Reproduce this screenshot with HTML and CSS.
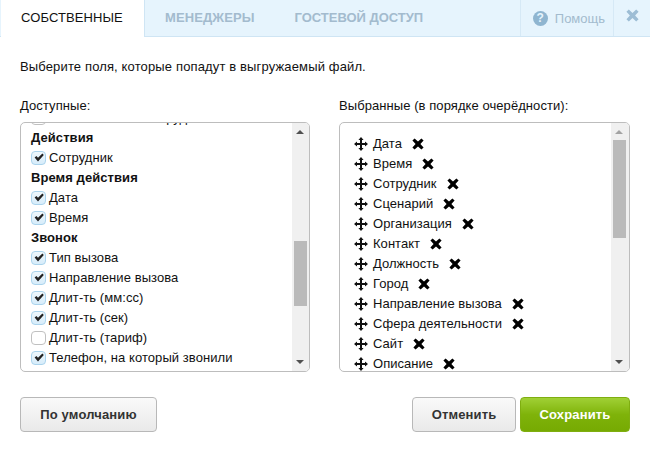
FILE: index.html
```html
<!DOCTYPE html>
<html lang="en">
<head>
    <meta charset="UTF-8">
    <meta name="viewport" content="width=device-width, initial-scale=1.0">
    <title>Выгрузка</title>
    <link rel="stylesheet" href="styles.css">
</head>
<body>
    <svg class="sprites" width="0" height="0">
        <symbol id="move" viewBox="0 0 14 14">
            <path d="M7 0 9.6 3H8v3h3V4.4L14 7l-3 2.6V8H8v3h1.6L7 14l-2.6-3H6V8H3v1.6L0 7l3-2.6V6h3V3H4.4z"/>
        </symbol>
        <symbol id="cross" viewBox="0 0 12 12">
            <path d="M2.6.4 6 3.6 9.4.4l2.2 2.2L8.4 6l3.2 3.4-2.2 2.2L6 8.4l-3.4 3.2-2.2-2.2L3.6 6 .4 2.6z"/>
        </symbol>
        <symbol id="check" viewBox="0 0 10 9">
            <path d="M0.6 4.6 2.4 3 4 4.8 8.4 0.4 9.8 2 4 8.4z"/>
        </symbol>
    </svg>

    <!-- Tabs -->
    <div class="tabs">
        <div class="tab tab-active">СОБСТВЕННЫЕ</div>
        <div class="tab">МЕНЕДЖЕРЫ</div>
        <div class="tab tab-guest">ГОСТЕВОЙ ДОСТУП</div>
        <div class="tab-help">
            <span class="help-icon">?</span>
            Помощь
        </div>
        <div class="tab-close">
            <svg width="13" height="13"><use href="#cross"/></svg>
        </div>
    </div>

    <div class="content">
        <p class="intro">Выберите поля, которые попадут в выгружаемый файл.</p>

        <div class="columns">
            <div class="column column-left">
                <div class="column-title">Доступные:</div>
                <div class="listbox">
                    <div class="list-view">
                        <ul class="fields">
                            <li class="field"><span class="box"></span>Ответственный сотрудник</li>
                            <li class="group">Действия</li>
                            <li class="field"><span class="box box-on"><svg width="10" height="9"><use href="#check"/></svg></span>Сотрудник</li>
                            <li class="group">Время действия</li>
                            <li class="field"><span class="box box-on"><svg width="10" height="9"><use href="#check"/></svg></span>Дата</li>
                            <li class="field"><span class="box box-on"><svg width="10" height="9"><use href="#check"/></svg></span>Время</li>
                            <li class="group">Звонок</li>
                            <li class="field"><span class="box box-on"><svg width="10" height="9"><use href="#check"/></svg></span>Тип вызова</li>
                            <li class="field"><span class="box box-on"><svg width="10" height="9"><use href="#check"/></svg></span>Направление вызова</li>
                            <li class="field"><span class="box box-on"><svg width="10" height="9"><use href="#check"/></svg></span>Длит-ть (мм:сс)</li>
                            <li class="field"><span class="box box-on"><svg width="10" height="9"><use href="#check"/></svg></span>Длит-ть (сек)</li>
                            <li class="field"><span class="box"></span>Длит-ть (тариф)</li>
                            <li class="field"><span class="box box-on"><svg width="10" height="9"><use href="#check"/></svg></span>Телефон, на который звонили</li>
                        </ul>
                    </div>
                    <div class="scrollbar">
                        <span class="arrow arrow-up"></span>
                        <div class="track"><div class="thumb thumb-left"></div></div>
                        <span class="arrow arrow-down"></span>
                    </div>
                </div>
            </div>

            <div class="column column-right">
                <div class="column-title">Выбранные (в порядке очерёдности):</div>
                <div class="listbox">
                    <div class="list-view">
                        <ul class="chosen">
                            <li><svg class="move" width="14" height="14"><use href="#move"/></svg>Дата<svg class="remove" width="12" height="12"><use href="#cross"/></svg></li>
                            <li><svg class="move" width="14" height="14"><use href="#move"/></svg>Время<svg class="remove" width="12" height="12"><use href="#cross"/></svg></li>
                            <li><svg class="move" width="14" height="14"><use href="#move"/></svg>Сотрудник<svg class="remove" width="12" height="12"><use href="#cross"/></svg></li>
                            <li><svg class="move" width="14" height="14"><use href="#move"/></svg>Сценарий<svg class="remove" width="12" height="12"><use href="#cross"/></svg></li>
                            <li><svg class="move" width="14" height="14"><use href="#move"/></svg>Организация<svg class="remove" width="12" height="12"><use href="#cross"/></svg></li>
                            <li><svg class="move" width="14" height="14"><use href="#move"/></svg>Контакт<svg class="remove" width="12" height="12"><use href="#cross"/></svg></li>
                            <li><svg class="move" width="14" height="14"><use href="#move"/></svg>Должность<svg class="remove" width="12" height="12"><use href="#cross"/></svg></li>
                            <li><svg class="move" width="14" height="14"><use href="#move"/></svg>Город<svg class="remove" width="12" height="12"><use href="#cross"/></svg></li>
                            <li><svg class="move" width="14" height="14"><use href="#move"/></svg>Направление вызова<svg class="remove" width="12" height="12"><use href="#cross"/></svg></li>
                            <li><svg class="move" width="14" height="14"><use href="#move"/></svg>Сфера деятельности<svg class="remove" width="12" height="12"><use href="#cross"/></svg></li>
                            <li><svg class="move" width="14" height="14"><use href="#move"/></svg>Сайт<svg class="remove" width="12" height="12"><use href="#cross"/></svg></li>
                            <li><svg class="move" width="14" height="14"><use href="#move"/></svg>Описание<svg class="remove" width="12" height="12"><use href="#cross"/></svg></li>
                        </ul>
                    </div>
                    <div class="scrollbar">
                        <span class="arrow arrow-up arrow-dim"></span>
                        <div class="track"><div class="thumb thumb-right"></div></div>
                        <span class="arrow arrow-down"></span>
                    </div>
                </div>
            </div>
        </div>

        <div class="actions">
            <button class="btn btn-default">По умолчанию</button>
            <div class="actions-right">
                <button class="btn btn-cancel">Отменить</button>
                <button class="btn btn-save">Сохранить</button>
            </div>
        </div>
    </div>
</body>
</html>
```

FILE: styles.css
```css
/* General styles */
body {
    margin: 0;
    padding: 0;
    font-family: "Liberation Sans", Arial, sans-serif;
    font-size: 13px;
    color: #111111;
    background-color: #ffffff;
    overflow: hidden;
}

.sprites {
    display: block;
}

/* Tabs */
.tabs {
    display: flex;
    height: 36px;
    background-color: #e6f4fd;
    border-bottom: 1px solid #cfe5f4;
    font-weight: bold;
    color: #a3bbce;
}

.tab {
    padding: 0 20px;
    line-height: 36px;
    white-space: nowrap;
    letter-spacing: 0.1px;
}

.tab-guest {
    letter-spacing: -0.03px;
}

.tab-active {
    width: 103px;
    height: 37px;
    margin-left: 1px;
    background-color: #ffffff;
    border-right: 1px solid #cfe5f4;
    font-weight: normal;
    color: #111111;
}

.tab-help {
    display: flex;
    align-items: center;
    gap: 7px;
    height: 36px;
    margin-left: auto;
    padding: 0 8px 0 12px;
    border-left: 1px solid #d6e9f6;
    font-weight: normal;
}

.help-icon {
    width: 15px;
    height: 15px;
    border-radius: 50%;
    background-color: #8fb5d0;
    color: #e6f4fd;
    font-size: 12px;
    font-weight: bold;
    line-height: 15px;
    text-align: center;
}

.tab-close {
    display: flex;
    align-items: center;
    justify-content: center;
    width: 37px;
    padding-bottom: 5px;
    box-sizing: border-box;
    border-left: 1px solid #d6e9f6;
    fill: #9dbdd5;
}

/* Content */
.content {
    padding: 0 20px;
}

.intro {
    margin: 0;
    padding-top: 22px;
    line-height: 15px;
    letter-spacing: 0.14px;
}

.columns {
    display: flex;
    justify-content: space-between;
    margin-top: 24px;
}

.column-left {
    width: 290px;
}

.column-right {
    width: 291px;
}

.column-title {
    line-height: 15px;
    margin-bottom: 9px;
    letter-spacing: 0.07px;
}

.listbox {
    display: flex;
    box-sizing: border-box;
    height: 250px;
    border: 1px solid #bdbdbd;
    border-radius: 5px;
    overflow: hidden;
}

.list-view {
    flex: 1;
    overflow: hidden;
}

/* Available fields */
.fields {
    margin: -16px 0 0;
    padding: 0 0 0 10px;
    list-style: none;
    letter-spacing: 0.07px;
}

.fields li {
    display: flex;
    align-items: center;
    height: 20px;
}

.group {
    font-weight: bold;
}

.box {
    flex: none;
    display: flex;
    align-items: center;
    justify-content: center;
    box-sizing: border-box;
    width: 15px;
    height: 14px;
    margin: 1px 3px 0 0;
    border: 1px solid #c0c0c0;
    border-radius: 4px;
    background-color: #ffffff;
}

.box-on {
    border-color: #a9d3ec;
    background: linear-gradient(#eef7fc, #d6ecfa);
    fill: #222222;
}

/* Chosen fields */
.chosen {
    margin: 10px 0 0;
    padding: 0 0 0 14px;
    list-style: none;
    letter-spacing: 0.04px;
}

.chosen li {
    display: flex;
    align-items: center;
    height: 20px;
    white-space: nowrap;
}

.move {
    flex: none;
    margin: 2px 5px 0 0;
    fill: #111111;
}

.remove {
    flex: none;
    margin: 2px 0 0 10px;
    fill: #000000;
}

/* Scrollbars */
.scrollbar {
    flex: none;
    display: flex;
    flex-direction: column;
    width: 17px;
    background-color: #f0f0f0;
}

.column-right .scrollbar {
    width: 18px;
}

.arrow {
    flex: none;
    height: 17px;
    position: relative;
}

.arrow::after {
    content: "";
    position: absolute;
    left: 4px;
    border-left: 4px solid transparent;
    border-right: 4px solid transparent;
}

.arrow-up::after {
    top: 7px;
    border-bottom: 4px solid #505050;
}

.arrow-dim::after {
    border-bottom-color: #a3a3a3;
}

.arrow-down::after {
    top: 6px;
    border-top: 4px solid #505050;
}

.track {
    flex: 1;
    padding: 0 2px;
}

.column-right .track {
    padding-right: 3px;
}

.thumb {
    background-color: #bababa;
}

.thumb-left {
    height: 65px;
    margin-top: 101px;
}

.thumb-right {
    height: 98px;
}

/* Buttons */
.actions {
    display: flex;
    justify-content: space-between;
    margin-top: 25px;
}

.actions-right {
    display: flex;
    gap: 4px;
}

.btn {
    height: 35px;
    padding: 0;
    border: 1px solid #b8b8b8;
    border-radius: 4px;
    font-family: inherit;
    font-size: 13px;
    font-weight: bold;
    letter-spacing: 0.15px;
    color: #333333;
    background: linear-gradient(#fafafa, #e9e9e9);
}

.btn-default {
    width: 137px;
}

.btn-cancel {
    width: 104px;
}

.btn-save {
    width: 110px;
    border-color: #7fae10;
    color: #ffffff;
    background: linear-gradient(#a0d035 0, #7fb30a 50%, #76aa02 100%);
}
```
